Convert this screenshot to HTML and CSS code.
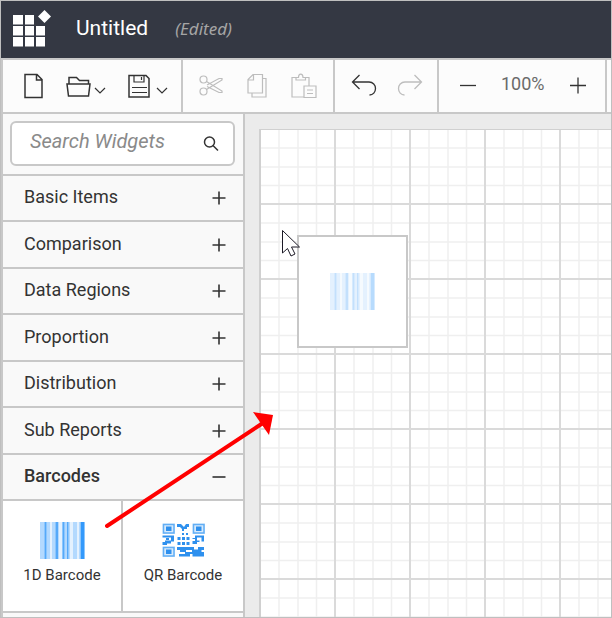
FILE: index.html
```html
<!DOCTYPE html>
<html lang="en">
<head>
<meta charset="utf-8">
<title>Report Designer</title>
<meta name="viewport" content="width=device-width, initial-scale=1">
<link rel="stylesheet" href="styles.css">
</head>
<body>
<div class="app">
  <header class="header">
    <svg class="logo" width="38" height="38" viewBox="0 0 38 38" fill="#fff" aria-hidden="true">
      <path d="M0 5h10v9.500H0zM12 5h9v9.500h-9zM0 16h10v9.500H0zM12 16h9v9.500h-9zM23 16h9v9.500h-9zM0 27h10v9.500H0zM12 27h9v9.500h-9zM23 27h9v9.500h-9z"/>
      <path d="M31.500 0l6.500 6.500-6.500 6.500-6.500-6.500z"/>
    </svg>
    <h1 class="title">Untitled</h1>
    <span class="state">(Edited)</span>
  </header>

  <div class="toolbar" role="toolbar" aria-label="Report">
    <div class="group group-file">
      <button class="tool" aria-label="New">
        <svg width="20" height="26" viewBox="0 0 20 26"><path d="M1 1.500h12l5 5v18H1zM12.500 1.500v5.500h5.500"/></svg>
      </button>
      <button class="tool" aria-label="Open">
        <svg width="40" height="26" viewBox="0 0 40 26"><path d="M3 11V4.500h7.500l3 3h9V11M1 11h23l-1.500 12h-20z"/><path class="thin" d="M29 15l5 5 5-5"/></svg>
      </button>
      <button class="tool" aria-label="Save">
        <svg width="42" height="26" viewBox="0 0 42 26"><path d="M1 2.500h17l3 3v18.500H1z"/><path class="thin" d="M6 2.500v6.500h10V2.500M13.500 4v3M4 14.500h15M4 19.500h15M29 15l5 5 5-5"/></svg>
      </button>
    </div>
    <div class="group group-edit">
      <button class="tool" aria-label="Cut" disabled>
        <svg width="24" height="24" viewBox="0 0 24 24"><circle cx="4.500" cy="5.500" r="3.500"/><circle cx="4.500" cy="17.500" r="3.500"/><path d="M7.500 7.500l15.500 9.500v1.500h-3L8 12.500M7.500 15.500L23 6V4.500h-3L8 11"/></svg>
      </button>
      <button class="tool" aria-label="Copy" disabled>
        <svg width="20" height="26" viewBox="0 0 20 26"><path d="M6 1.500h9.500V20H1V6.500zM6.500 1.500V7H1M15.500 5.500H19V24H5v-4"/></svg>
      </button>
      <button class="tool" aria-label="Paste" disabled>
        <svg width="26" height="26" viewBox="0 0 26 26"><path d="M6 4.500H1V24h12M13 4.500h5V13M5 7V4.500h2.500C7.500 0 12 0 12 4.500h2.500V7zM13 13h12v11.500H13zM16 17h6M16 20.500h6"/></svg>
      </button>
    </div>
    <div class="group group-history">
      <button class="tool" aria-label="Undo">
        <svg width="26" height="24" viewBox="0 0 26 24"><path d="M8.500 1l-7 7 7 7M1.500 8H18c4 0 6.500 3 6.500 6.500S22 21 18.500 21"/></svg>
      </button>
      <button class="tool" aria-label="Redo" disabled>
        <svg width="26" height="24" viewBox="0 0 26 24"><path d="M17.500 1l7 7-7 7M24.500 8H8c-4 0-6.500 3-6.500 6.500S4 21 7.500 21"/></svg>
      </button>
    </div>
    <div class="group group-zoom">
      <button class="tool" aria-label="Zoom out">
        <svg width="18" height="18" viewBox="0 0 18 18"><path d="M1 8.500h16"/></svg>
      </button>
      <output class="zoom">100%</output>
      <button class="tool" aria-label="Zoom in">
        <svg width="18" height="18" viewBox="0 0 18 18"><path d="M1 8.500h16M9 .5v16"/></svg>
      </button>
    </div>
  </div>

  <div class="workspace">
    <aside class="sidebar">
      <form class="search" role="search">
        <input class="search-input" type="text" placeholder="Search Widgets" aria-label="Search Widgets">
        <button class="search-button" type="button" aria-label="Search">
          <svg width="16" height="16" viewBox="0 0 16 16"><circle cx="6.500" cy="6" r="5"/><path d="M10 9.500l5 5"/></svg>
        </button>
      </form>
      <nav class="categories" aria-label="Widgets">
        <button class="category">Basic Items<svg width="14" height="14" viewBox="0 0 14 14"><path d="M.5 7h13M7 .5v13"/></svg></button>
        <button class="category">Comparison<svg width="14" height="14" viewBox="0 0 14 14"><path d="M.5 7h13M7 .5v13"/></svg></button>
        <button class="category">Data Regions<svg width="14" height="14" viewBox="0 0 14 14"><path d="M.5 7h13M7 .5v13"/></svg></button>
        <button class="category">Proportion<svg width="14" height="14" viewBox="0 0 14 14"><path d="M.5 7h13M7 .5v13"/></svg></button>
        <button class="category">Distribution<svg width="14" height="14" viewBox="0 0 14 14"><path d="M.5 7h13M7 .5v13"/></svg></button>
        <button class="category">Sub Reports<svg width="14" height="14" viewBox="0 0 14 14"><path d="M.5 7h13M7 .5v13"/></svg></button>
        <button class="category open" aria-expanded="true">Barcodes<svg width="14" height="14" viewBox="0 0 14 14"><path d="M.5 7h13"/></svg></button>
      </nav>
      <div class="tiles">
        <button class="tile">
          <svg width="45" height="37" viewBox="0 0 45 37" aria-hidden="true">
            <g id="bars"><path fill="#b3d9fe" d="M0 0h11v37H0zM12 0h7v37h-7zM21 0h9v37h-9zM33 0h5v37h-5zM39 0h6v37h-6z"/><path fill="#e4f1fe" d="M10 0h2v37h-2zM19 0h3v37h-3zM30 0h3v37h-3zM37 0h2v37h-2z"/><path fill="#8cc6fd" d="M4 0h3v37H4zM15 0h3v37h-3zM22 0h3v37h-3zM27 0h2v37h-2zM40 0h5v37h-5z"/><path fill="#55a9f9" d="M5 0h1v37H5zM16 0h2v37h-2zM23 0h1v37h-1zM27 0h1v37h-1z"/><path fill="#3399fb" d="M41 0h3v37h-3z"/></g>
          </svg>
          <span>1D Barcode</span>
        </button>
        <button class="tile">
          <svg width="43" height="37" viewBox="0 0 43 37" aria-hidden="true">
            <path fill="#d6eafc" d="M.5 1.500H13V12H.5zM30.500 1.500H43V12H30.500zM.5 24.500H13V35H.5z"/>
            <path fill="none" stroke="#62aef5" stroke-width="1.500" d="M1.500 2.500h10.500v8.500H1.500zM31.500 2.500H42v8.500H31.500zM1.500 25.500h10.500V34H1.500z"/>
            <g fill="#2e90ee">
              <path d="M4 4.500h5.500v4.500H4zM34 4.500h5.500v4.500H34zM4 27.500h5.500V32H4z"/>
              <path d="M15 2h4l3 3 2-3h3v3h-2v2h-3v2h-2V7l-2-2h-3zM24 11h2v2h-2zM20 11h2v2h-2zM15.500 15h3v3h-3zM20 15h3v3h-3zM24.500 15h3v3h-3zM15.500 20h3v3h-3zM20 20h3v3h-3zM24.500 20h3v3h-3z"/>
              <path d="M.5 13.500H12v6H9v2H5v1.500H.5V20H3v-1.500h6v-3H.5zM4 16h3v2H4zM30.500 16H33v-2.500h9v6h-2.500v-4H35v3h2.500v1.500H35v2h-4.500v-3H33V17h-2.500z"/>
              <path d="M15 25h17v2.500h4V25h6v3h-2.500v2H42v4.500H30.500V32H28v2.500H17V32h6v-2h-5v-2h-3zM24 28v2h6v-2z" fill-rule="evenodd"/>
            </g>
          </svg>
          <span>QR Barcode</span>
        </button>
      </div>
      <svg class="drag-arrow" width="170" height="118" viewBox="0 0 170 118" aria-hidden="true"><path d="M2 115L158 12" stroke="#f00" stroke-width="4" stroke-linecap="round"/><path d="M148 1l20 3-4 20z" fill="#f00"/></svg>
    </aside>

    <main class="canvas">
      <div class="paper">
        <svg class="grid" width="100%" height="100%" aria-hidden="true">
          <defs><pattern id="cells" width="75" height="75" patternUnits="userSpaceOnUse">
            <path d="M18 0v75M37 0v75M55.500 0v75M0 18h75M0 37h75M0 55.500h75" stroke="#efefef" stroke-width="1.500"/>
            <path d="M74 0v75M0 74h75" stroke="#dadada" stroke-width="2"/>
          </pattern></defs>
          <rect width="100%" height="100%" fill="url(#cells)"/>
        </svg>
        <div class="dragged">
          <svg width="45" height="37" viewBox="0 0 45 37" aria-hidden="true"><use href="#bars"/></svg>
        </div>
        <svg class="cursor" width="20" height="28" viewBox="0 0 20 28" aria-hidden="true"><path d="M1.500 1.500v22.500l5-4.500 3.500 7.500 4-2-3.500-7h8z" fill="#fff" stroke="#1c1a26" stroke-width="1"/></svg>
      </div>
    </main>
  </div>
</div>
</body>
</html>
```
FILE: styles.css
```css
* { box-sizing: border-box; }

body {
  margin: 0;
  font-family: Roboto, "Liberation Sans", sans-serif;
  color: #333;
}

button {
  margin: 0;
  padding: 0;
  border: 0;
  background: none;
  color: inherit;
  font: inherit;
}

svg { display: block; flex: none; }

.app {
  display: flex;
  flex-direction: column;
  height: 100vh;
  border: 1px solid #bfbfbf;
  overflow: hidden;
}

.header {
  flex: none;
  display: flex;
  align-items: center;
  height: 57px;
  padding: 0 12px 2px;
  background: #343843;
  color: #fff;
}

.title {
  margin: 0 27px 2px 25px;
  font-size: 21px;
  line-height: 24px;
  font-weight: 400;
}

.state {
  color: #a5a5a5;
  font-family: "Noto Sans", sans-serif;
  font-size: 17px;
  line-height: 24px;
  font-style: italic;
}

.toolbar {
  flex: none;
  display: flex;
  height: 56px;
  border: 2px solid #c8c8c8;
  border-right: 0;
  background: #fcfcfc;
}

.group {
  display: flex;
  align-items: center;
  border-right: 2px solid #c8c8c8;
}

.group-file { gap: 22px; padding: 0 11px 0 21px; }
.group-edit { gap: 24px; padding: 0 16px; }
.group-history { gap: 20px; padding: 0 14px 0 16px; }
.group-zoom { gap: 24px; padding: 0 18px 0 20px; }

.tool svg,
.search-button svg {
  fill: none;
  stroke: #333;
  stroke-width: 1.5;
}

.tool .thin { stroke-width: 1.2; }
.tool:disabled svg { stroke: #bdbdbd; stroke-width: 1.2; }
.group-history .tool svg,
.group-zoom .tool svg { stroke-width: 1.3; }

.zoom {
  margin-bottom: 4px;
  color: #6a6a6a;
  font-size: 18px;
  line-height: 24px;
}

.workspace {
  flex: 1;
  display: flex;
  min-height: 0;
}

.sidebar {
  position: relative;
  z-index: 1;
  flex: none;
  width: 244px;
  border: 0 solid #c8c8c8;
  border-width: 0 2px;
  background: #f9f9f9;
}

.search {
  display: flex;
  align-items: center;
  height: 45px;
  margin: 7px 8px 8px 7px;
  padding-right: 14px;
  border: 2px solid #c8c8c8;
  border-radius: 6px;
  background: #fff;
}

.search-input {
  flex: 1;
  min-width: 0;
  height: 24px;
  margin-bottom: 6px;
  padding: 0 0 0 18px;
  border: 0;
  outline: 0;
  background: none;
  font: italic 20px/24px Roboto, sans-serif;
}

.search-input::placeholder { color: #8a8a8a; }

.categories { border-top: 2px solid #c8c8c8; }

.category {
  display: flex;
  align-items: center;
  justify-content: space-between;
  width: 100%;
  height: 46px;
  padding: 0 17px 2px 21px;
  border-bottom: 2px solid #c8c8c8;
  font-size: 18px;
  line-height: 24px;
  text-align: left;
}

.category:nth-child(even) { height: 47px; }
.category.open { font-weight: 500; }

.category svg {
  margin-top: 2px;
  fill: none;
  stroke: #333;
  stroke-width: 1.6;
}

.tiles {
  display: grid;
  grid-template-columns: 118px 1fr;
  gap: 2px;
  border-bottom: 2px solid #c8c8c8;
  background: #c8c8c8;
}

.tile {
  display: flex;
  flex-direction: column;
  align-items: center;
  gap: 6px;
  height: 110px;
  padding-top: 21px;
  background: #fff;
  font-size: 15px;
  line-height: 20px;
}

.drag-arrow {
  position: absolute;
  left: 102px;
  top: 297px;
}

.canvas {
  flex: 1;
  display: flex;
  min-width: 0;
  padding: 15px 0 0 14px;
  background: #ebebeb;
}

.paper {
  position: relative;
  flex: 1;
  border: 1px solid #d0d0d0;
  border-width: 1px 0 0 2px;
  background: #fff;
}

.grid { position: absolute; inset: 0; }

.dragged {
  position: absolute;
  left: 36px;
  top: 105px;
  display: grid;
  place-items: center;
  width: 111px;
  height: 113px;
  border: 2px solid #c8c8c8;
  background: #fff;
}

.dragged svg { opacity: .35; }

.cursor {
  position: absolute;
  left: 20px;
  top: 99px;
}
```
